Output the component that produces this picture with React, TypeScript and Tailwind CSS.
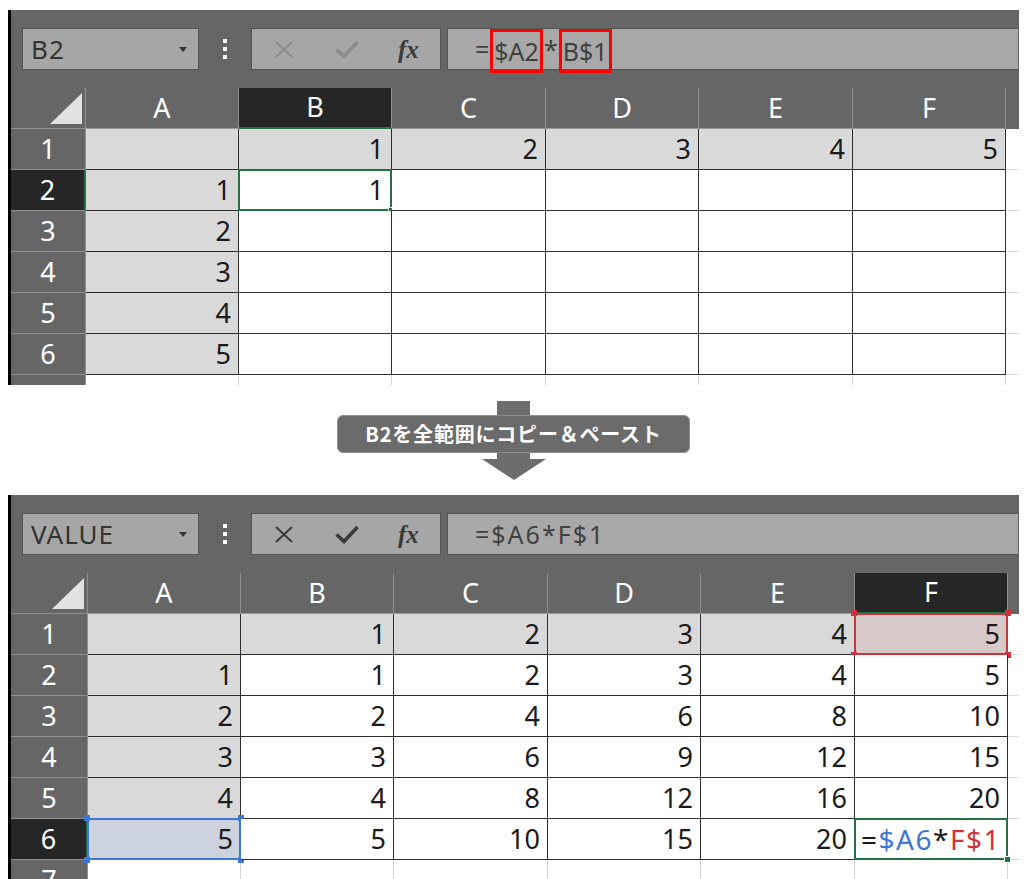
import React from "react";

type Mark = "green" | "red" | "blue" | undefined;

const WIDTHS = ["w-[153px]", "w-[153px]", "w-[154px]", "w-[153px]", "w-[154px]", "w-[153px]"];
const LETTERS = ["A", "B", "C", "D", "E", "F"];

function Frame({ kind }: { kind: Mark }) {
  if (!kind) return null;
  if (kind === "green") {
    return (
      <>
        <span className="pointer-events-none absolute -left-px -top-px -right-px -bottom-px border-2 border-[#217346]" />
        <span className="absolute -right-[4px] -bottom-[4px] w-[7px] h-[7px] bg-[#217346] border border-white" />
      </>
    );
  }
  const b = kind === "red" ? "border-[#d0323c]" : "border-[#3e77d4]";
  const bg = kind === "red" ? "bg-[#d0323c]" : "bg-[#3e77d4]";
  return (
    <>
      <span className={`pointer-events-none absolute -left-px -top-px -right-px -bottom-px border-2 ${b}`} />
      <span className={`absolute -left-[4px] -top-[4px] w-[6px] h-[6px] ${bg}`} />
      <span className={`absolute -right-[4px] -top-[4px] w-[6px] h-[6px] ${bg}`} />
      <span className={`absolute -left-[4px] -bottom-[4px] w-[6px] h-[6px] ${bg}`} />
      <span className={`absolute -right-[4px] -bottom-[4px] w-[6px] h-[6px] ${bg}`} />
    </>
  );
}

type CellDef = { v?: React.ReactNode; fill?: string; mark?: Mark; left?: boolean };

type SheetProps = {
  name: string;
  active: boolean;
  formula: React.ReactNode;
  selCol: number;
  selRow: number;
  wide: boolean;
  height: string;
  cells: CellDef[][];
};

function XIcon({ color }: { color: string }) {
  return (
    <svg width="20" height="17" viewBox="0 0 20 17">
      <path d="M2 1 L18 16 M18 1 L2 16" stroke={color} strokeWidth="2" fill="none" />
    </svg>
  );
}

function CheckIcon({ color }: { color: string }) {
  return (
    <svg width="24" height="19" viewBox="0 0 24 19">
      <path d="M1.5 9.5 L9 16.5 L22.5 2" stroke={color} strokeWidth="3.6" fill="none" />
    </svg>
  );
}

function Sheet({ name, active, formula, selCol, selRow, wide, height, cells }: SheetProps) {
  const rh = wide ? "w-[77px]" : "w-[75px]";
  const iconColor = active ? "#3a3a3a" : "#8c8c8c";
  return (
    <div className={`w-[1011px] ${height} overflow-hidden border-l-[3px] border-black bg-[#666666] flex flex-col`}>
      {/* formula bar */}
      <div className="h-[78px] shrink-0 flex items-center">
        <div className="ml-[11px] w-[177px] h-[42px] bg-[#a6a6a6] border border-[#555555] flex items-center justify-between pl-[8px] pr-[11px]">
          <span className="text-[26px] tracking-[1px] text-[#333333] leading-none">{name}</span>
          <svg width="8" height="5" viewBox="0 0 8 5">
            <path d="M0 0H8L4 5Z" fill="#333333" />
          </svg>
        </div>
        <div className="w-[52px] flex flex-col items-center gap-[4px]">
          <span className="w-[4px] h-[4px] bg-white" />
          <span className="w-[4px] h-[4px] bg-white" />
          <span className="w-[4px] h-[4px] bg-white" />
        </div>
        <div className="w-[190px] h-[42px] bg-[#a6a6a6] border border-[#555555] flex items-center">
          <span className="ml-[22px] flex">
            <XIcon color={iconColor} />
          </span>
          <span className="ml-[41px] flex">
            <CheckIcon color={iconColor} />
          </span>
          <span className="ml-[39px] italic font-bold text-[25px] leading-none text-[#3a3a3a] font-['Liberation_Serif',serif]">fx</span>
        </div>
        <div className="ml-[6px] mr-[1px] flex-1 h-[42px] bg-[#a8a8a8] border border-[#555555] border-r-0 flex items-center pl-[27px] text-[25px] text-[#404040] leading-none">
          {formula}
        </div>
      </div>
      {/* column header row */}
      <div className="h-[41px] shrink-0 flex">
        <div className={`${rh} h-full border-r border-b border-[#8f8f8f] flex items-end justify-end pr-[3px] pb-[4px]`}>
          <svg width="32" height="31" viewBox="0 0 32 31">
            <path d="M32 0V31H0Z" fill="#e2e2e2" />
          </svg>
        </div>
        {LETTERS.map((l, c) => (
          <div
            key={l}
            className={`${WIDTHS[c]} h-full flex items-center justify-center text-white text-[27px] border-r border-[#8f8f8f] ${
              c === selCol ? "bg-[#262626] border-b-2 border-b-[#217346]" : "border-b border-b-[#9a9a9a]"
            }`}
          >
            {l}
          </div>
        ))}
        <div className="flex-1" />
      </div>
      {/* data rows */}
      {cells.map((row, r) => (
        <div key={r} className="h-[41px] shrink-0 flex">
          <div
            className={`${rh} h-full flex items-center justify-center text-white text-[27px] border-b border-[#8f8f8f] ${
              r === selRow ? "bg-[#262626] border-r-2 border-r-[#217346]" : "border-r border-r-[#8f8f8f]"
            }`}
          >
            {r + 1}
          </div>
          {row.map((cell, c) => (
            <div
              key={c}
              className={`relative ${WIDTHS[c]} h-full flex items-center ${
                cell.left ? "justify-start pl-[6px] text-[28px] tracking-[1.5px]" : "justify-end pr-[7px] text-[27px]"
              } text-[#1a1a1a] whitespace-nowrap border-r border-b border-[#2e2e2e] ${cell.fill ?? "bg-white"}`}
            >
              <span>{cell.v}</span>
              <Frame kind={cell.mark} />
            </div>
          ))}
          <div className="flex-1 h-full bg-white border-b border-[#d9d9d9]" />
        </div>
      ))}
      {/* row 7 (partial) */}
      <div className="h-[41px] shrink-0 flex">
        <div className={`${rh} h-full flex items-center justify-center text-white text-[27px] border-r border-[#8f8f8f]`}>7</div>
        {LETTERS.map((l, c) => (
          <div key={l} className={`${WIDTHS[c]} h-full bg-white border-r border-[#d4d4d4]`} />
        ))}
        <div className="flex-1 h-full bg-white" />
      </div>
    </div>
  );
}

const G = "bg-[#d9d9d9]";

function topCells(): CellDef[][] {
  const rows: CellDef[][] = [];
  for (let r = 0; r < 6; r++) {
    const row: CellDef[] = [];
    for (let c = 0; c < 6; c++) {
      let v = "";
      if (r === 0 && c > 0) v = String(c);
      if (c === 0 && r > 0) v = String(r);
      if (r === 1 && c === 1) v = "1";
      row.push({ v, fill: r === 0 || c === 0 ? G : "bg-white", mark: r === 1 && c === 1 ? "green" : undefined });
    }
    rows.push(row);
  }
  return rows;
}

function bottomCells(): CellDef[][] {
  const rows: CellDef[][] = [];
  for (let r = 0; r < 6; r++) {
    const row: CellDef[] = [];
    for (let c = 0; c < 6; c++) {
      let v = "";
      if (r === 0 && c > 0) v = String(c);
      else if (c === 0 && r > 0) v = String(r);
      else if (r > 0 && c > 0) v = String(r * c);
      row.push({ v, fill: r === 0 || c === 0 ? G : "bg-white" });
    }
    rows.push(row);
  }
  rows[0][5] = { v: "5", fill: "bg-[#d8c9c9]", mark: "red" };
  rows[5][0] = { v: "5", fill: "bg-[#ccd3de]", mark: "blue" };
  rows[5][5] = {
    v: (
      <>
        <span>=</span>
        <span className="text-[#3e77d4]">$A6</span>
        <span>*</span>
        <span className="text-[#d0323c]">F$1</span>
      </>
    ),
    fill: "bg-white",
    mark: "green",
    left: true,
  };
  return rows;
}

export default function App() {
  return (
    <div className="w-[1024px] h-[879px] overflow-hidden bg-white font-['Noto_Sans','Noto_Sans_CJK_JP',sans-serif]">
      <div className="pt-[10px] pl-[8px]">
        <Sheet
          name="B2"
          active={false}
          selCol={1}
          selRow={1}
          wide={false}
          height="h-[375px]"
          cells={topCells()}
          formula={
            <>
              <span>=</span>
              <span className="ml-[1px] inline-flex items-center h-[44px] mt-[4px] border-[3px] border-[#ff0000] px-[1px]">$A2</span>
              <span className="px-[1px]">*</span>
              <span className="inline-flex items-center h-[44px] mt-[4px] border-[3px] border-[#ff0000] px-[1px]">B$1</span>
            </>
          }
        />
      </div>
      <div className="h-[110px] pt-[16px] pl-[3px] flex flex-col items-center">
        <div className="w-[33px] h-[14px] bg-[#6d6d6d]" />
        <div className="w-[353px] h-[38px] rounded-[6px] bg-[#6b6b6b] border border-[#8e8e8e] flex items-center justify-center text-white font-bold text-[20px] tracking-[0.8px] font-['Noto_Sans_CJK_JP',sans-serif]">
          B2を全範囲にコピー＆ペースト
        </div>
        <div className="w-[33px] h-[6px] bg-[#6d6d6d]" />
        <svg width="64" height="21" viewBox="0 0 64 21">
          <path d="M0 0H64L32 21Z" fill="#6d6d6d" />
        </svg>
      </div>
      <div className="pl-[8px]">
        <Sheet
          name="VALUE"
          active={true}
          selCol={5}
          selRow={5}
          wide={true}
          height="h-[384px]"
          cells={bottomCells()}
          formula={<span className="tracking-[2px]">=$A6*F$1</span>}
        />
      </div>
    </div>
  );
}
